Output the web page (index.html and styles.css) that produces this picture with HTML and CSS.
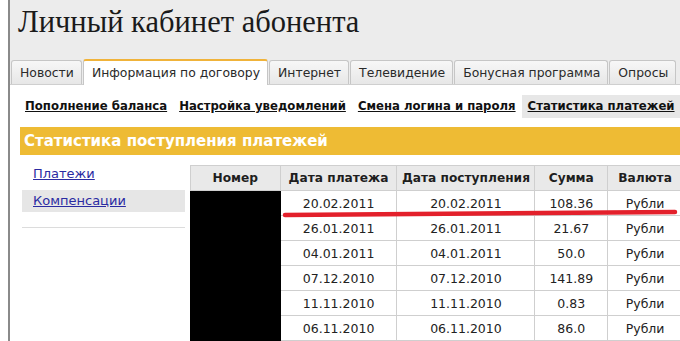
FILE: index.html
```html
<!DOCTYPE html>
<html lang="ru">
<head>
<meta charset="utf-8">
<link rel="stylesheet" href="styles.css">
</head>
<body>
<div class="page">
  <div class="header">
    <h1 class="title">Личный кабинет абонента</h1>
    <ul class="tabs">
      <li class="tab">Новости</li>
      <li class="tab active">Информация по договору</li>
      <li class="tab">Интернет</li>
      <li class="tab">Телевидение</li>
      <li class="tab">Бонусная программа</li>
      <li class="tab">Опросы</li>
    </ul>
  </div>
  <div class="content">
    <div class="subnav">
      <a class="subitem">Пополнение баланса</a>
      <a class="subitem">Настройка уведомлений</a>
      <a class="subitem">Смена логина и пароля</a>
      <a class="subitem current">Статистика платежей</a>
    </div>
    <div class="bar">Статистика поступления платежей</div>
    <div class="main">
      <div class="side">
        <div class="sidelink"><a>Платежи</a></div>
        <div class="sidelink sel"><a>Компенсации</a></div>
        <div class="sideline"></div>
      </div>
      <div class="tablewrap">
        <table class="pay">
          <thead>
            <tr><th class="c1">Номер</th><th class="c2">Дата платежа</th><th class="c3">Дата поступления</th><th class="c4">Сумма</th><th class="c5">Валюта</th></tr>
          </thead>
          <tbody>
            <tr><td class="hid"></td><td>20.02.2011</td><td>20.02.2011</td><td>108.36</td><td>Рубли</td></tr>
            <tr><td class="hid"></td><td>26.01.2011</td><td>26.01.2011</td><td>21.67</td><td>Рубли</td></tr>
            <tr><td class="hid"></td><td>04.01.2011</td><td>04.01.2011</td><td>50.0</td><td>Рубли</td></tr>
            <tr><td class="hid"></td><td>07.12.2010</td><td>07.12.2010</td><td>141.89</td><td>Рубли</td></tr>
            <tr><td class="hid"></td><td>11.11.2010</td><td>11.11.2010</td><td>0.83</td><td>Рубли</td></tr>
            <tr><td class="hid"></td><td>06.11.2010</td><td>06.11.2010</td><td>86.0</td><td>Рубли</td></tr>
          </tbody>
        </table>
        <svg class="mark" width="400" height="12" viewBox="0 0 400 12">
          <path d="M3 8 Q 200 6.5 393 5" stroke="#e3202b" stroke-width="4.5" fill="none" stroke-linecap="round"/>
        </svg>
      </div>
    </div>
  </div>
</div>
</body>
</html>
```
FILE: styles.css
```css
html, body {
  margin: 0;
  padding: 0;
  background: #fff;
  height: 100%;
  overflow: hidden;
}
.page {
  margin-left: 8px;
  border-left: 2px solid #8a8a8a;
  min-height: 341px;
  font-family: "DejaVu Sans", Verdana, sans-serif;
  color: #222;
}
.header {
  background: #ececec;
  padding-top: 4px;
}
.title {
  margin: 0;
  padding-left: 8px;
  font-family: "Liberation Serif", serif;
  font-weight: normal;
  font-size: 30.5px;
  line-height: 36px;
  color: #1a1a1a;
  height: 55px;
}
.tabs {
  list-style: none;
  margin: 0;
  padding: 0 0 0 1px;
  display: flex;
  align-items: flex-end;
  gap: 1px;
  border-bottom: 1px solid #cfcfcf;
}
.tab {
  font-size: 12.4px;
  line-height: 23px;
  height: 23px;
  padding: 0 7px 0 8px;
  border: 1px solid #c6c6c6;
  border-bottom: none;
  border-radius: 3px 3px 0 0;
  background: linear-gradient(#f7f7f7, #e7e7e7);
  color: #2a2a2a;
  white-space: nowrap;
}
.tab.active {
  background: #fff;
  border-top: 2px solid #f0b33a;
  height: 24px;
  margin-bottom: -1px;
}
.content {
  background: #fff;
}
.subnav {
  display: flex;
  gap: 0;
  padding: 10px 0 0 9px;
  align-items: center;
}
.subitem {
  font-weight: bold;
  font-size: 11.7px;
  line-height: 23px;
  padding: 0 6px;
  text-decoration: underline;
  color: #111;
  white-space: nowrap;
}
.subitem.current {
  background: #e7e7e7;
}
.bar {
  margin: 9px 0 0 10px;
  height: 28px;
  line-height: 28px;
  background: #eebb34;
  color: #fff;
  font-weight: bold;
  font-size: 15px;
  padding-left: 4px;
  white-space: nowrap;
}
.main {
  display: flex;
  margin-top: 8px;
  gap: 5px;
}
.side {
  margin-left: 12px;
  width: 163px;
  flex: none;
}
.sidelink {
  font-size: 13px;
  line-height: 22px;
  padding-left: 11px;
  margin-bottom: 5px;
}
.sidelink a {
  color: #2b2ba2;
  text-decoration: underline;
}
.sidelink.sel {
  background: #e6e6e6;
}
.sideline {
  margin-top: 15px;
  border-top: 1px solid #dcdcdc;
}
.tablewrap {
  position: relative;
  margin-top: 2px;
}
.pay {
  border-collapse: collapse;
  font-size: 12.5px;
  width: 492px;
}
.pay th, .pay td {
  border: 1px solid #cfcfcf;
  text-align: center;
  height: 24px;
  padding: 0;
  white-space: nowrap;
}
.pay th {
  background: #e9e9e9;
  font-weight: bold;
  font-size: 12.2px;
  color: #1e1e1e;
}
.pay td {
  color: #222;
}
.pay tr > :last-child { border-right: none; }
.pay .c1 { width: 89px; }
.pay .c2 { width: 116px; }
.pay .c3 { width: 137px; }
.pay .c4 { width: 72px; }
.pay .c5 { width: 74px; }
.pay td.hid {
  background: #000;
  border-color: #000;
}
.mark {
  position: absolute;
  left: 92px;
  top: 42px;
}
```
